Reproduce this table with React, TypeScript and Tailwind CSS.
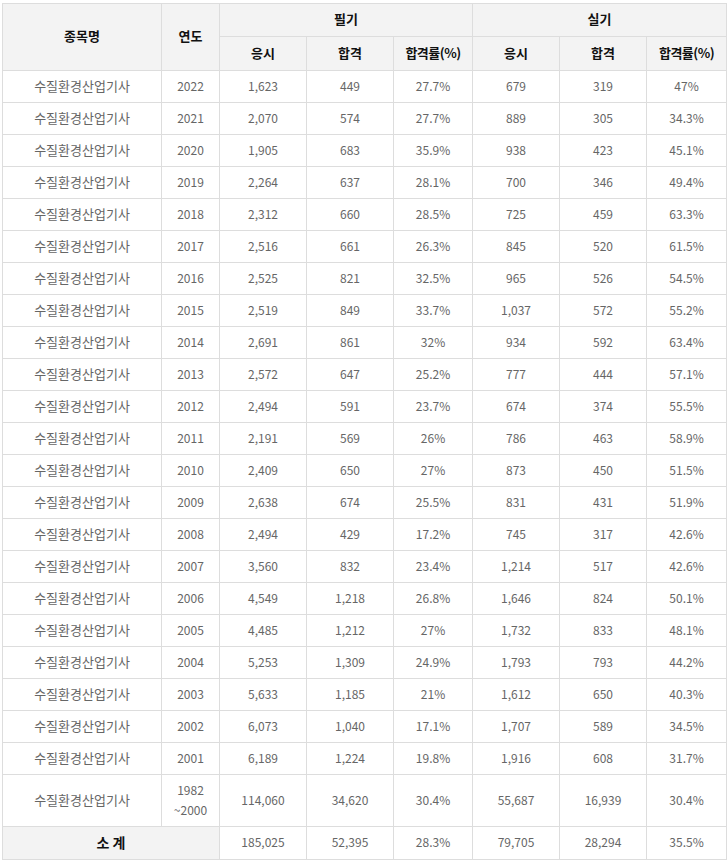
const rows: [string, string, string, string, string, string, string][] = [
  ["2022", "1,623", "449", "27.7%", "679", "319", "47%"],
  ["2021", "2,070", "574", "27.7%", "889", "305", "34.3%"],
  ["2020", "1,905", "683", "35.9%", "938", "423", "45.1%"],
  ["2019", "2,264", "637", "28.1%", "700", "346", "49.4%"],
  ["2018", "2,312", "660", "28.5%", "725", "459", "63.3%"],
  ["2017", "2,516", "661", "26.3%", "845", "520", "61.5%"],
  ["2016", "2,525", "821", "32.5%", "965", "526", "54.5%"],
  ["2015", "2,519", "849", "33.7%", "1,037", "572", "55.2%"],
  ["2014", "2,691", "861", "32%", "934", "592", "63.4%"],
  ["2013", "2,572", "647", "25.2%", "777", "444", "57.1%"],
  ["2012", "2,494", "591", "23.7%", "674", "374", "55.5%"],
  ["2011", "2,191", "569", "26%", "786", "463", "58.9%"],
  ["2010", "2,409", "650", "27%", "873", "450", "51.5%"],
  ["2009", "2,638", "674", "25.5%", "831", "431", "51.9%"],
  ["2008", "2,494", "429", "17.2%", "745", "317", "42.6%"],
  ["2007", "3,560", "832", "23.4%", "1,214", "517", "42.6%"],
  ["2006", "4,549", "1,218", "26.8%", "1,646", "824", "50.1%"],
  ["2005", "4,485", "1,212", "27%", "1,732", "833", "48.1%"],
  ["2004", "5,253", "1,309", "24.9%", "1,793", "793", "44.2%"],
  ["2003", "5,633", "1,185", "21%", "1,612", "650", "40.3%"],
  ["2002", "6,073", "1,040", "17.1%", "1,707", "589", "34.5%"],
  ["2001", "6,189", "1,224", "19.8%", "1,916", "608", "31.7%"],
];

const oldRow = ["114,060", "34,620", "30.4%", "55,687", "16,939", "30.4%"];
const total = ["185,025", "52,395", "28.3%", "79,705", "28,294", "35.5%"];

const th = "border border-[#dddddd] bg-[#f3f3f3] text-center font-bold text-[#111111] text-[13px] pb-[2px]";
const td = "border border-[#dddddd] text-center text-[#666666] pb-[2px]";

export default function App() {
  return (
    <div
      className="bg-white pl-[2px] pt-[3px] w-[727px] h-[863px]"
      style={{ fontFamily: '"Noto Sans CJK KR", "Noto Sans", sans-serif' }}
    >
      <table className="table-fixed border-collapse w-[724px] text-[12px]">
        <colgroup>
          <col className="w-[159px]" />
          <col className="w-[58px]" />
          <col className="w-[87px]" />
          <col className="w-[87px]" />
          <col className="w-[79px]" />
          <col className="w-[87px]" />
          <col className="w-[87px]" />
          <col className="w-[80px]" />
        </colgroup>
        <thead>
          <tr className="h-[33px]">
            <th rowSpan={2} className={th}>종목명</th>
            <th rowSpan={2} className={th}>연도</th>
            <th colSpan={3} className={th}>필기</th>
            <th colSpan={3} className={th}>실기</th>
          </tr>
          <tr className="h-[34px]">
            <th className={th}>응시</th>
            <th className={th}>합격</th>
            <th className={`${th} tracking-[-0.5px]`}>합격률(%)</th>
            <th className={th}>응시</th>
            <th className={th}>합격</th>
            <th className={`${th} tracking-[-0.5px]`}>합격률(%)</th>
          </tr>
        </thead>
        <tbody>
          {rows.map((r) => (
            <tr key={r[0]} className="h-[32px]">
              <td className={`${td} text-[13px]`}>수질환경산업기사</td>
              {r.map((c, i) => (
                <td key={i} className={td}>{c}</td>
              ))}
            </tr>
          ))}
          <tr className="h-[52px]">
            <td className={`${td} text-[13px]`}>수질환경산업기사</td>
            <td className={`${td} leading-[20px]`}>
              1982
              <br />
              ~2000
            </td>
            {oldRow.map((c, i) => (
              <td key={i} className={td}>{c}</td>
            ))}
          </tr>
          <tr className="h-[33px]">
            <td colSpan={2} className={`${th} text-[14px]`}>소 계</td>
            {total.map((c, i) => (
              <td key={i} className={td}>{c}</td>
            ))}
          </tr>
        </tbody>
      </table>
    </div>
  );
}
